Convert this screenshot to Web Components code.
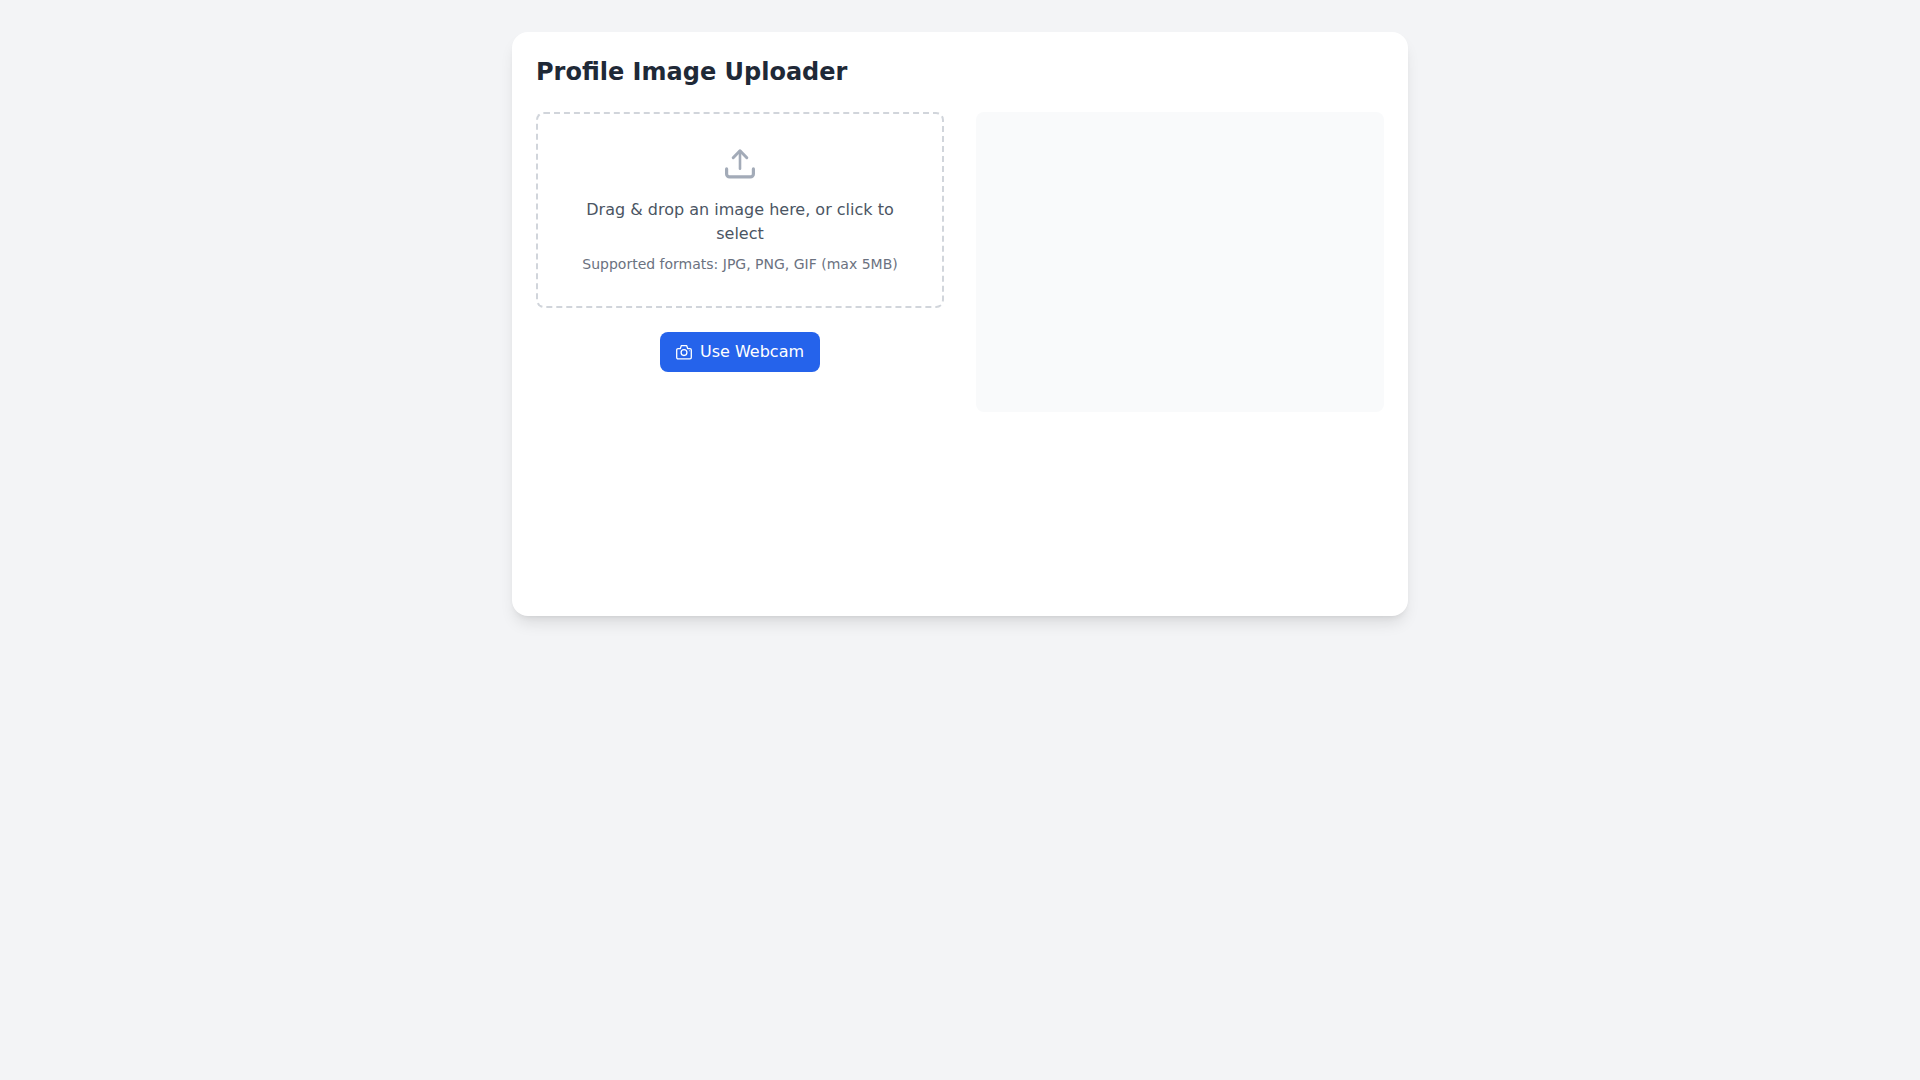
<!DOCTYPE html>
<html lang="en">
<head>
<meta charset="utf-8">
<title>Profile Image Uploader</title>
<style>
  html, body {
    min-height: 100%;
  }

  body {
    margin: 0;
    background: #f3f4f6;
    font-family: "DejaVu Sans", sans-serif;
  }
</style>
</head>
<body>
<image-uploader>
  <drop-zone slot="left"></drop-zone>
  <webcam-button slot="left"></webcam-button>
  <image-preview slot="right"></image-preview>
</image-uploader>

<script>
class ImageUploader extends HTMLElement {
  constructor() {
    super();
    this.attachShadow({ mode: "open" });
  }

  connectedCallback() {
    this.shadowRoot.innerHTML = `
    <style>
      :host {
        display: block;
        box-sizing: border-box;
        min-height: 100vh;
        padding-top: 32px;
      }

      .card {
        box-sizing: border-box;
        width: 896px;
        min-height: 584px;
        margin: 0 auto;
        padding: 24px;
        background: #fff;
        border-radius: 16px;
        box-shadow: 0 10px 15px -3px rgba(0,0,0,.1), 0 4px 6px -4px rgba(0,0,0,.1);
      }

      h1 {
        margin: 0 0 24px;
        font-size: 24px;
        line-height: 32px;
        font-weight: 700;
        color: #1f2937;
      }

      .columns {
        display: grid;
        grid-template-columns: 1fr 1fr;
        gap: 32px;
      }

      .left {
        display: flex;
        flex-direction: column;
        align-items: center;
        gap: 24px;
      }
    </style>
    <div class="card">
      <h1>Profile Image Uploader</h1>
      <div class="columns">
        <div class="left"><slot name="left"></slot></div>
        <div><slot name="right"></slot></div>
      </div>
    </div>
  `;
  }
}

class DropZone extends HTMLElement {
  constructor() {
    super();
    this.attachShadow({ mode: "open" });
  }

  connectedCallback() {
    this.shadowRoot.innerHTML = `
    <style>
      :host {
        display: block;
        box-sizing: border-box;
        width: 100%;
        height: 196px;
        padding: 32px;
        border: 2px dashed #d1d5db;
        border-radius: 8px;
        text-align: center;
      }

      svg {
        display: block;
        width: 36px;
        height: 36px;
        margin: 0 auto 16px;
        color: #a3abb8;
      }

      p {
        margin: 0;
        font-size: 16px;
        line-height: 24px;
        color: #4b5563;
      }

      small {
        display: block;
        margin-top: 8px;
        font-size: 14px;
        line-height: 20px;
        color: #6b7280;
      }
    </style>
    <svg viewBox="0 0 36 36" fill="none" stroke="currentColor" stroke-linecap="round" stroke-linejoin="round">
      <path stroke-width="3.2" d="M4.6 22.9v5a3 3 0 003 3h20.8a3 3 0 003-3v-5"/>
      <path stroke-width="3" d="M11.2 11.7l6.8-6.9 6.8 6.9"/>
      <path stroke-width="2.6" d="M18 5v17.8"/>
    </svg>
    <p>Drag &amp; drop an image here, or click to select</p>
    <small>Supported formats: JPG, PNG, GIF (max 5MB)</small>
  `;
  }
}

class WebcamButton extends HTMLElement {
  constructor() {
    super();
    this.attachShadow({ mode: "open" });
  }

  connectedCallback() {
    this.shadowRoot.innerHTML = `
    <style>
      :host {
        display: inline-flex;
        align-items: center;
        gap: 8px;
        padding: 8px 16px;
        background: #2563eb;
        border-radius: 8px;
        color: #fff;
        font-size: 16px;
        line-height: 24px;
        cursor: pointer;
      }

      svg {
        display: block;
        width: 16px;
        height: 16px;
      }
    </style>
    <svg viewBox="0 0 16 16" fill="none" stroke="currentColor" stroke-width="1.3" stroke-linejoin="round">
      <path d="M2 4.7h2.2l1.2-3.1h5.2l1.2 3.1H14A1.3 1.3 0 0115.3 6v7.5a1.3 1.3 0 01-1.3 1.3H2A1.3 1.3 0 01.7 13.5V6A1.3 1.3 0 012 4.7z"/>
      <circle cx="8" cy="8.6" r="2.9"/>
      <circle cx="13.4" cy="6.8" r=".5" fill="currentColor" stroke="none"/>
    </svg>
    <span>Use Webcam</span>
  `;
  }
}

class ImagePreview extends HTMLElement {
  constructor() {
    super();
    this.attachShadow({ mode: "open" });
  }

  connectedCallback() {
    this.shadowRoot.innerHTML = `
    <style>
      :host {
        display: block;
        height: 300px;
        background: #f9fafb;
        border-radius: 8px;
      }
    </style>
  `;
  }
}

customElements.define("image-uploader", ImageUploader);
customElements.define("drop-zone", DropZone);
customElements.define("webcam-button", WebcamButton);
customElements.define("image-preview", ImagePreview);
</script>
</body>
</html>
